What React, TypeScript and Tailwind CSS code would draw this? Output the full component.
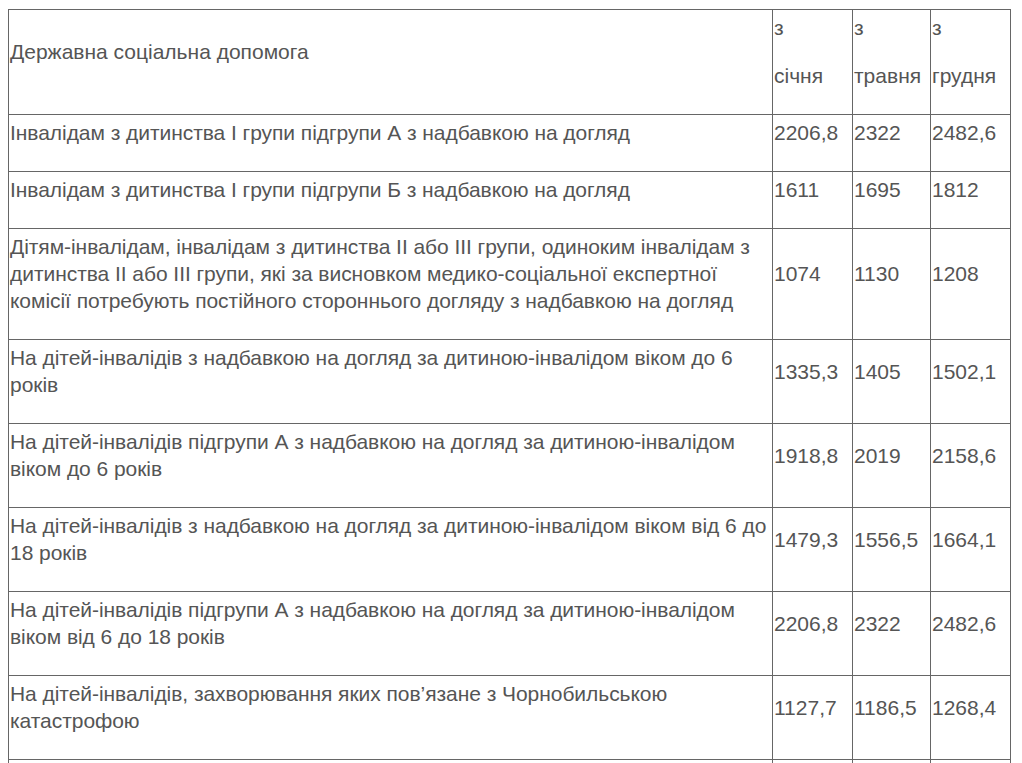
const rows: { label: string; jan: string; may: string; dec: string }[] = [
  { label: "Інвалідам з дитинства І групи підгрупи А з надбавкою на догляд", jan: "2206,8", may: "2322", dec: "2482,6" },
  { label: "Інвалідам з дитинства І групи підгрупи Б з надбавкою на догляд", jan: "1611", may: "1695", dec: "1812" },
  {
    label:
      "Дітям-інвалідам, інвалідам з дитинства ІІ або ІІІ групи, одиноким інвалідам з дитинства ІІ або ІІІ групи, які за висновком медико-соціальної експертної комісії потребують постійного стороннього догляду з надбавкою на догляд",
    jan: "1074",
    may: "1130",
    dec: "1208",
  },
  { label: "На дітей-інвалідів з надбавкою на догляд за дитиною-інвалідом віком до 6 років", jan: "1335,3", may: "1405", dec: "1502,1" },
  { label: "На дітей-інвалідів підгрупи А з надбавкою на догляд за дитиною-інвалідом віком до 6 років", jan: "1918,8", may: "2019", dec: "2158,6" },
  { label: "На дітей-інвалідів з надбавкою на догляд за дитиною-інвалідом віком від 6 до 18 років", jan: "1479,3", may: "1556,5", dec: "1664,1" },
  { label: "На дітей-інвалідів підгрупи А з надбавкою на догляд за дитиною-інвалідом віком від 6 до 18 років", jan: "2206,8", may: "2322", dec: "2482,6" },
  { label: "На дітей-інвалідів, захворювання яких пов’язане з Чорнобильською катастрофою", jan: "1127,7", may: "1186,5", dec: "1268,4" },
];

const cell = "border border-[#666] pl-[1px] pr-0 py-[4px] align-middle";
const para = "mb-[21px]";

export default function App() {
  return (
    <div className="min-h-screen bg-white p-2 pt-[9px] text-[21px] leading-[27px] text-[#555]" style={{ fontFamily: '"Liberation Sans", Arial, sans-serif' }}>
      <table className="w-[1002px] border-collapse table-fixed">
        <colgroup>
          <col className="w-[764px]" />
          <col className="w-[80px]" />
          <col className="w-[78px]" />
          <col className="w-[80px]" />
        </colgroup>
        <tbody>
          {/* Header */}
          <tr>
            <td className={cell}>
              <p className={para}>Державна соціальна допомога</p>
            </td>
            {["січня", "травня", "грудня"].map((m) => (
              <td key={m} className={cell}>
                <p className={para}>з</p>
                <p className={para}>{m}</p>
              </td>
            ))}
          </tr>

          {rows.map((r, i) => (
            <tr key={i}>
              <td className={cell}>
                <p className={`${para} tracking-[-0.05px]`}>{r.label}</p>
              </td>
              <td className={cell}>
                <p className={para}>{r.jan}</p>
              </td>
              <td className={cell}>
                <p className={para}>{r.may}</p>
              </td>
              <td className={cell}>
                <p className={para}>{r.dec}</p>
              </td>
            </tr>
          ))}

          {/* next row continues below the fold */}
          <tr className="h-[40px]">
            <td className={cell}></td>
            <td className={cell}></td>
            <td className={cell}></td>
            <td className={cell}></td>
          </tr>
        </tbody>
      </table>
    </div>
  );
}
